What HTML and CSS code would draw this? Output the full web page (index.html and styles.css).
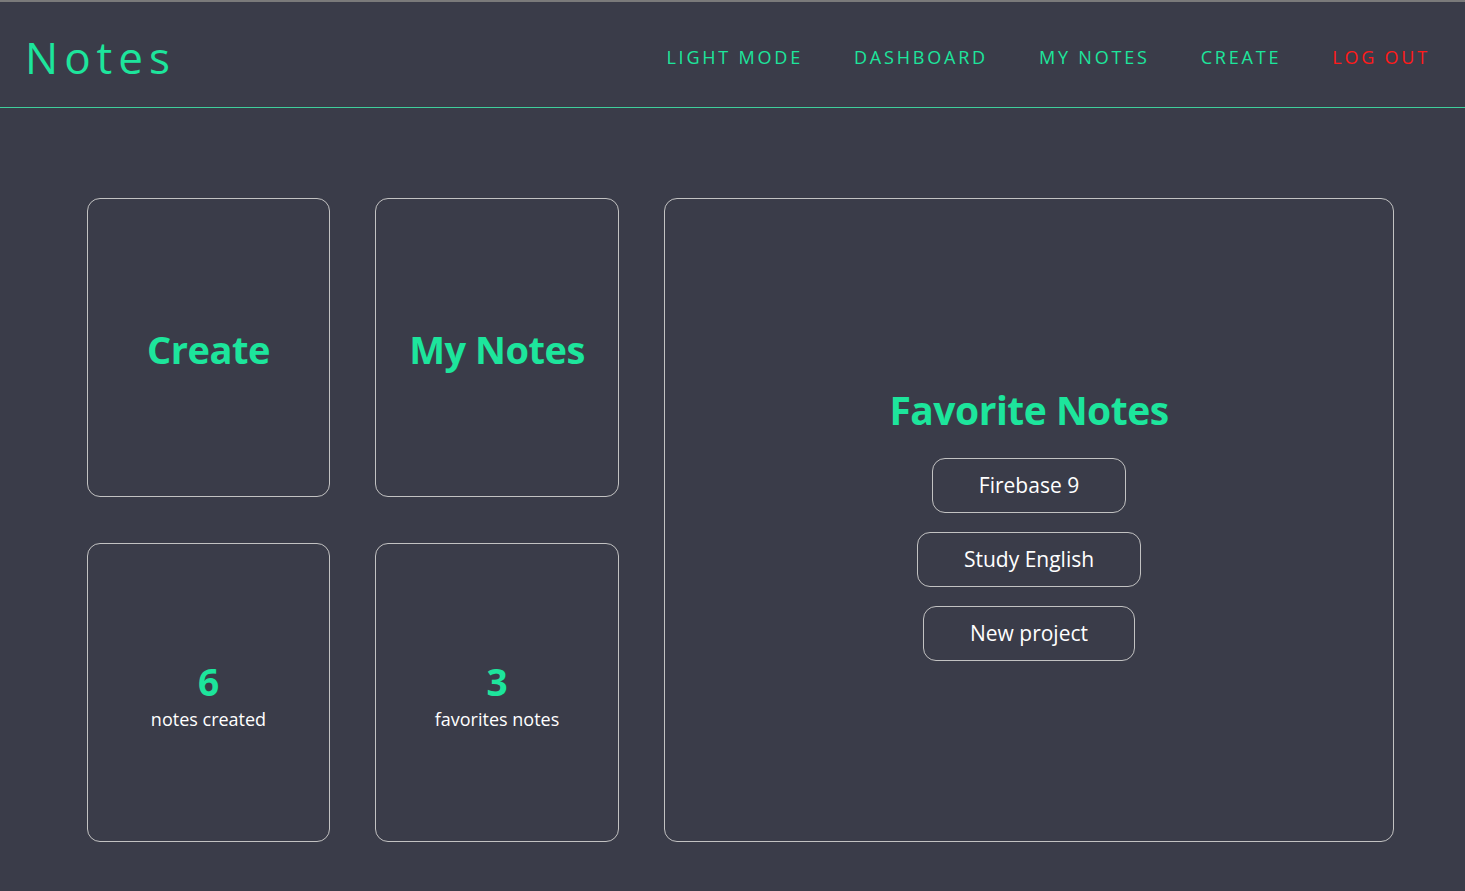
FILE: index.html
```html
<!DOCTYPE html>
<html lang="en">
<head>
<meta charset="utf-8">
<title>Notes</title>
<link rel="stylesheet" href="styles.css">
</head>
<body>
<header class="topbar">
  <div class="logo">Notes</div>
  <nav class="nav">
    <a class="nav-link" href="#">Light mode</a>
    <a class="nav-link" href="#">Dashboard</a>
    <a class="nav-link" href="#">My notes</a>
    <a class="nav-link" href="#">Create</a>
    <a class="nav-link logout" href="#">Log out</a>
  </nav>
</header>
<main class="dashboard">
  <div class="tiles">
    <a class="tile" href="#"><h2 class="tile-title">Create</h2></a>
    <a class="tile" href="#"><h2 class="tile-title">My Notes</h2></a>
    <div class="tile stat">
      <div class="stat-num">6</div>
      <div class="stat-label">notes created</div>
    </div>
    <div class="tile stat">
      <div class="stat-num">3</div>
      <div class="stat-label">favorites notes</div>
    </div>
  </div>
  <section class="favorites">
    <h2 class="fav-title">Favorite Notes</h2>
    <ul class="fav-list">
      <li><a class="fav-btn" href="#">Firebase 9</a></li>
      <li><a class="fav-btn" href="#">Study English</a></li>
      <li><a class="fav-btn" href="#">New project</a></li>
    </ul>
  </section>
</main>
</body>
</html>
```

FILE: styles.css
```css
* { box-sizing: border-box; }
html, body { height: 100%; }
body {
  margin: 0;
  background: #3a3c49;
  font-family: "Open Sans", "Noto Sans", sans-serif;
  color: #ffffff;
  border-top: 2px solid #7a7a7a;
}
a { text-decoration: none; }

.topbar {
  height: 106px;
  display: flex;
  align-items: center;
  justify-content: space-between;
  padding: 0 35px 0 25px;
  border-bottom: 1px solid #3fcf9c;
}
.logo {
  font-size: 44px;
  letter-spacing: 6px;
  color: #1de59c;
  font-weight: 400;
  margin-top: 4px;
}
.nav {
  display: flex;
  gap: 51px;
  margin-top: 4px;
}
.nav-link {
  font-size: 18px;
  letter-spacing: 2.8px;
  text-transform: uppercase;
  color: #1de59c;
}
.nav-link.logout { color: #ff1a1a; }

.dashboard {
  display: flex;
  gap: 45px;
  padding: 90px 71px 0 87px;
}
.tiles {
  display: grid;
  grid-template-columns: 243px 244px;
  grid-template-rows: 299px 299px;
  gap: 46px 45px;
}
.tile {
  border: 1px solid #c2c2c2;
  border-radius: 13px;
  display: flex;
  flex-direction: column;
  align-items: center;
  justify-content: center;
}
.tile-title {
  margin: 2px 0 0;
  font-size: 38px;
  font-weight: 700;
  color: #1de59c;
  letter-spacing: -0.5px;
}
.stat { justify-content: center; }
.stat-num {
  font-size: 37px;
  font-weight: 700;
  color: #1de59c;
  line-height: 48px;
  margin-top: 3px;
}
.stat-label {
  font-size: 18px;
  line-height: 24px;
  margin-top: 1px;
  color: #ffffff;
}

.favorites {
  flex: 1;
  height: 644px;
  border: 1px solid #c2c2c2;
  border-radius: 13px;
  display: flex;
  flex-direction: column;
  align-items: center;
  justify-content: center;
  padding-top: 4px;
}
.fav-title {
  margin: 0 0 22px;
  font-size: 39px;
  font-weight: 700;
  color: #1de59c;
  letter-spacing: -0.5px;
  line-height: 52px;
}
.fav-list {
  list-style: none;
  margin: 0;
  padding: 0;
  display: flex;
  flex-direction: column;
  align-items: center;
  gap: 19px;
}
.fav-btn {
  display: block;
  height: 55px;
  line-height: 53px;
  padding: 0 46px;
  border: 1px solid #c2c2c2;
  border-radius: 13px;
  font-size: 21px;
  color: #ffffff;
}
```
